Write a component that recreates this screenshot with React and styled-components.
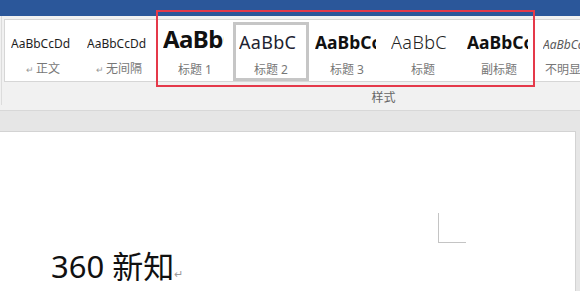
import React from "react";
import styled, { createGlobalStyle } from "styled-components";

const GlobalStyle = createGlobalStyle`
  html, body { margin: 0; padding: 0; background: #e6e6e6; }
  * { box-sizing: border-box; }
  body { font-family: "Noto Sans", "Noto Sans CJK SC", sans-serif; }
`;

const Screen = styled.div`
  position: relative;
  width: 580px;
  height: 291px;
  overflow: hidden;
  display: flex;
  flex-direction: column;
  background: #e6e6e6;
`;

const TitleBar = styled.div`
  height: 16px;
  flex: none;
  background: #2b579a;
`;

const Ribbon = styled.div`
  height: 95px;
  flex: none;
  background: #f1f1f1;
  border-bottom: 1px solid #d8d8d8;
  overflow: hidden;
  display: flex;
`;

const RibbonGroup = styled.div`
  flex: none;
  width: 764px;
  margin-left: 1px;
  height: 89px;
  border-left: 1px solid #dcdcdc;
  display: flex;
  flex-direction: column;
`;

const Gallery = styled.div`
  margin: 3px 0 0 2px;
  height: 64px;
  background: #fff;
  border: 1px solid #d6d6d6;
  display: flex;
  align-items: flex-start;
`;

const Tile = styled.div`
  flex: none;
  width: 76px;
  height: 59px;
  margin-top: 2px;
  border: 3px solid ${(p) => (p.$selected ? "#c6c6c6" : "transparent")};
  display: flex;
  flex-direction: column;
  align-items: stretch;
`;

const Sample = styled.div`
  height: 27px;
  margin: 0 6px 0 3px;
  overflow: hidden;
  white-space: nowrap;
  display: flex;
  align-items: flex-end;
  line-height: 1;
  padding-bottom: 1px;
  font-size: ${(p) => p.$size}px;
  font-weight: ${(p) => p.$weight || 400};
  font-style: ${(p) => (p.$italic ? "italic" : "normal")};
  color: ${(p) => p.$color || "#1e1e1e"};
  letter-spacing: ${(p) => p.$spacing || 0}px;
`;

const Label = styled.div`
  margin-top: 10px;
  font-size: 12px;
  line-height: 16px;
  color: #777;
  text-align: center;
  white-space: nowrap;
`;

const ReturnMark = styled.span`
  font-size: ${(p) => p.$size || 9}px;
  color: #9a9a9a;
  margin-right: 2px;
`;

const GroupLabel = styled.div`
  margin-top: 8px;
  font-size: 12px;
  line-height: 16px;
  color: #666;
  text-align: center;
`;

const Band = styled.div`
  height: 20px;
  flex: none;
  background: #e6e6e6;
`;

const Page = styled.div`
  flex: 1;
  width: 576px;
  background: #fff;
  border-top: 1px solid #d3d3d3;
  border-right: 1px solid #d3d3d3;
  padding: 81px 0 0 51px;
  display: flex;
  flex-direction: column;
`;

const MarginMark = styled.div`
  margin-left: 387px;
  width: 28px;
  height: 30px;
  border-left: 1px solid #c4c4c4;
  border-bottom: 1px solid #c4c4c4;
`;

const BodyText = styled.div`
  margin-top: 3px;
  font-family: "Noto Sans", "Noto Sans CJK SC", sans-serif;
  font-size: 31px;
  line-height: 40px;
  color: #111;
  white-space: nowrap;
  display: flex;
  align-items: baseline;
`;

const Annotation = styled.div`
  position: absolute;
  left: 156px;
  top: 10px;
  width: 379px;
  height: 77px;
  border: 2px solid #e5394a;
  pointer-events: none;
`;

const styles = [
  { sample: "AaBbCcDd", label: "正文", mark: true, size: 12 },
  { sample: "AaBbCcDd", label: "无间隔", mark: true, size: 12 },
  { sample: "AaBbCc", label: "标题 1", size: 24, weight: 700, color: "#111", spacing: -0.6 },
  { sample: "AaBbC", label: "标题 2", size: 18, selected: true, color: "#1d2230", spacing: 0.3 },
  { sample: "AaBbCc", label: "标题 3", size: 17.5, weight: 700, color: "#111" },
  { sample: "AaBbC", label: "标题", size: 18, weight: 300, color: "#222", spacing: 0.4 },
  { sample: "AaBbCc", label: "副标题", size: 17.5, weight: 700, color: "#111" },
  { sample: "AaBbCcI", label: "不明显强调", size: 12, italic: true, color: "#5a5a5a" },
];

export default function App() {
  return (
    <>
      <GlobalStyle />
      <Screen>
        <TitleBar />
        <Ribbon>
          <RibbonGroup>
            <Gallery>
              {styles.map((s) => (
                <Tile key={s.label} $selected={s.selected}>
                  <Sample
                    $size={s.size}
                    $weight={s.weight}
                    $italic={s.italic}
                    $color={s.color}
                    $spacing={s.spacing}
                  >
                    {s.sample}
                  </Sample>
                  <Label>
                    {s.mark && <ReturnMark>↵</ReturnMark>}
                    {s.label}
                  </Label>
                </Tile>
              ))}
            </Gallery>
            <GroupLabel>样式</GroupLabel>
          </RibbonGroup>
        </Ribbon>
        <Band />
        <Page>
          <MarginMark />
          <BodyText>
            360 新知<ReturnMark $size={11}>↵</ReturnMark>
          </BodyText>
        </Page>
        <Annotation />
      </Screen>
    </>
  );
}
